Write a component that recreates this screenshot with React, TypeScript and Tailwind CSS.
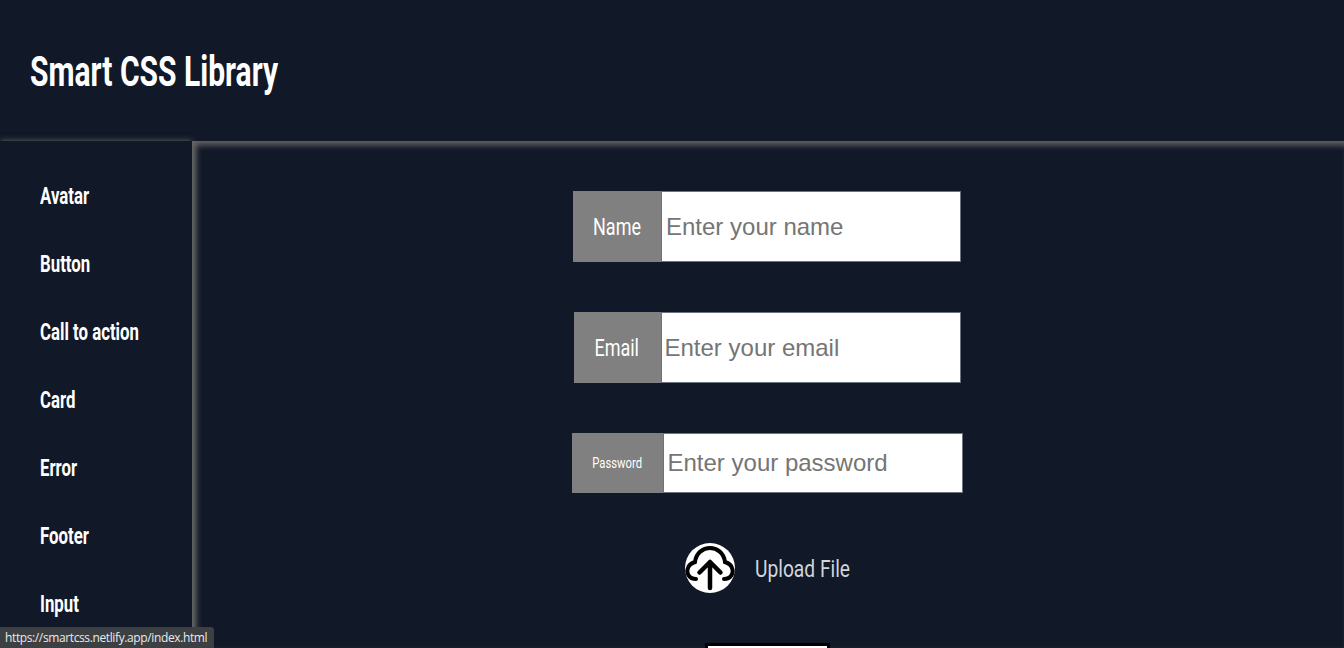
import React from "react";

const items = ["Avatar", "Button", "Call to action", "Card", "Error", "Footer", "Input"];

function Row({ label, ph, labelW, h, small, tight }: { label: string; ph: string; labelW: string; h: string; small?: boolean; tight?: boolean }) {
  return (
    <div className={`flex shrink-0 ${h}`}>
      <label className={`${labelW} bg-[#808080] text-white flex items-center justify-center ${small ? "text-[15px]" : "text-[24px]"}`}>
        <span className="inline-block scale-x-[0.75]">{label}</span>
      </label>
      <input readOnly placeholder={ph} className={`w-[300px] bg-white border border-[#6b7280] ${tight ? "pl-[3px]" : "pl-[4px]"} font-['Liberation_Sans',sans-serif] text-[24px] placeholder:text-[#757575] outline-none`} />
    </div>
  );
}

export default function App() {
  return (
    <div className="relative h-[648px] w-full overflow-hidden bg-[#111827] font-['Roboto',sans-serif]">
      <header className="h-[141px] flex items-center pl-[30px]">
        <h1 className="text-white text-[42px] font-bold leading-none mt-[2px] whitespace-nowrap origin-left scale-x-[0.715]">Smart CSS Library</h1>
      </header>
      <div className="flex h-[507px]">
        <nav className="w-[192px] shrink-0 pt-[21px] pl-[40px] shadow-[0_0_6px_#666666] flex flex-col">
          {items.map((t) => (
            <a key={t} className="h-[68px] shrink-0 flex items-center text-white text-[24px] font-bold whitespace-nowrap origin-left scale-x-[0.7]">{t}</a>
          ))}
        </nav>
        <main className="flex-1 flex flex-col items-center pt-[50px] pr-[2px] gap-[50px] shadow-[inset_4px_4px_6px_#666666]">
          <Row label="Name" ph="Enter your name" labelW="w-[88px]" h="h-[71px]" />
          <Row label="Email" ph="Enter your email" labelW="w-[87px]" h="h-[71px]" tight />
          <Row label="Password" ph="Enter your password" labelW="w-[91px]" h="h-[60px]" small />
          <div className="flex shrink-0 items-center gap-[20px] h-[50px]">
            <svg width="50" height="50" viewBox="0 0 50 50" className="shrink-0">
              <circle cx="25" cy="25" r="25" fill="#fff" />
              <path d="M11 36 C4 36 1 30 3 25 C4 21 7 20 10 19 C11 10 18 5 25 5 C32 5 39 10 40 19 C43 20 46 21 47 25 C49 30 46 36 39 36" fill="none" stroke="#000" strokeWidth="4" strokeLinecap="round" />
              <path d="M25 45 V19 M14.5 29.5 L25 19 L35.5 29.5" fill="none" stroke="#000" strokeWidth="4.5" strokeLinecap="round" strokeLinejoin="round" />
            </svg>
            <span className="w-[94px] mt-[2px] text-[#d1d5db] text-[24px] whitespace-nowrap origin-left scale-x-[0.8]">Upload File</span>
          </div>
          <button className="w-[125px] h-[60px] shrink-0 bg-white border-[3px] border-black" />
        </main>
      </div>
      <div className="absolute left-0 bottom-0 h-[21px] w-[214px] bg-[#3c4043] rounded-tr-[3px] text-[#e8eaed] text-[12px] pl-[5px] flex items-center font-['Open_Sans',sans-serif] tracking-[-0.38px] whitespace-nowrap">https://smartcss.netlify.app/index.html</div>
    </div>
  );
}
